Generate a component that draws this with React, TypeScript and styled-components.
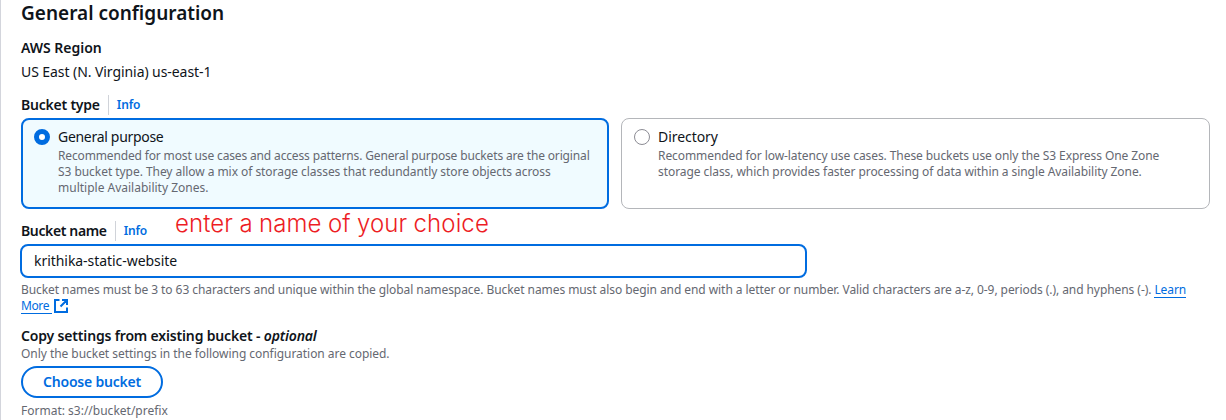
import React from 'react';
import styled, { createGlobalStyle } from 'styled-components';

const GlobalStyle = createGlobalStyle`
  *, *::before, *::after { box-sizing: border-box; }
  body { margin: 0; background: #fff; overflow: hidden; }
`;

const blue = '#006ce0';

const Panel = styled.main`
  position: relative;
  width: 1226px;
  height: 420px;
  overflow: hidden;
  padding: 0 16px 0 20px;
  border-left: 1px solid #d3d5dc;
  background: #fff;
  color: #0f141a;
  font-family: 'Noto Sans', 'Open Sans', sans-serif;
`;

const Title = styled.h2<{ $ls: number }>`
  margin: 0 0 11px;
  font-size: 19px;
  line-height: 27px;
  font-weight: 600;
  white-space: nowrap;
  letter-spacing: ${(p) => p.$ls}px;
`;

const Label = styled.div<{ $ls: number }>`
  font-size: 14px;
  line-height: 20px;
  font-weight: 600;
  white-space: nowrap;
  letter-spacing: ${(p) => p.$ls}px;
`;

const Value = styled.div<{ $ls: number }>`
  margin-top: 4px;
  font-size: 14px;
  line-height: 20px;
  white-space: nowrap;
  letter-spacing: ${(p) => p.$ls}px;
`;

const LabelRow = styled.div<{ $top: number; $bottom: number }>`
  display: flex;
  align-items: center;
  height: 20px;
  margin: ${(p) => p.$top}px 0 ${(p) => p.$bottom}px;
`;

const InfoLink = styled.a<{ $ls: number }>`
  margin-left: 8px;
  padding-left: 8px;
  border-left: 1px solid #d0d3d9;
  color: ${blue};
  font-size: 12px;
  line-height: 20px;
  font-weight: 600;
  letter-spacing: ${(p) => p.$ls}px;
`;

const Tiles = styled.div`
  display: grid;
  grid-template-columns: 588px 589px;
  gap: 12px;
  height: 91px;
`;

const Tile = styled.label<{ $selected?: boolean }>`
  display: flex;
  gap: 8px;
  padding: ${(p) => (p.$selected ? '8px 11px' : '9px 12px')};
  border: ${(p) => (p.$selected ? `2px solid ${blue}` : '1px solid #b4b6ba')};
  border-radius: 8px;
  background: ${(p) => (p.$selected ? '#f0fbff' : '#fff')};
`;

const Radio = styled.span<{ $selected?: boolean }>`
  flex: none;
  width: 16px;
  height: 16px;
  margin-top: 1px;
  border-radius: 50%;
  border: ${(p) => (p.$selected ? `5px solid ${blue}` : '1px solid #8c8c94')};
  background: #fff;
`;

const TileTitle = styled.div<{ $ls: number }>`
  margin-bottom: 2px;
  font-size: 14px;
  line-height: 18px;
  letter-spacing: ${(p) => p.$ls}px;
`;

const Note = styled.div<{ $ls: number }>`
  color: #656871;
  font-size: 12px;
  line-height: 16px;
  white-space: nowrap;
  letter-spacing: ${(p) => p.$ls}px;
`;

const NameInput = styled.div<{ $ls: number }>`
  display: flex;
  align-items: center;
  width: 787px;
  height: 34px;
  margin: 0 0 4px -1px;
  padding: 0 12px 1px;
  border: 2px solid ${blue};
  border-radius: 8px;
  font-size: 14px;
  letter-spacing: ${(p) => p.$ls}px;
`;

const Link = styled.a`
  display: inline-block;
  height: 16px;
  color: ${blue};
  border-bottom: 1px solid ${blue};
`;

const MoreRow = styled(Note)`
  display: flex;
  margin-bottom: 12px;
`;

const ExternalIcon = styled.svg`
  margin-left: 1px;
`;

const ChooseButton = styled.button<{ $ls: number }>`
  display: block;
  width: 142px;
  height: 32px;
  margin: 4px 0 5px;
  padding: 0;
  border: 2px solid ${blue};
  border-radius: 16px;
  background: #fff;
  color: ${blue};
  font: 600 14px/20px 'Noto Sans', 'Open Sans', sans-serif;
  letter-spacing: ${(p) => p.$ls}px;
`;

const Annotation = styled.div`
  position: absolute;
  left: 174px;
  top: 209px;
  color: #ed1c24;
  font: 350 24px/30px Inter, sans-serif;
  letter-spacing: 0.1px;
  word-spacing: -0.5px;
  white-space: nowrap;
`;

export default function App() {
  return (
    <>
      <GlobalStyle />
      <Panel>
        <Title $ls={0}>General configuration</Title>
        <Label $ls={-0.04}>AWS Region</Label>
        <Value $ls={-0.07}>US East (N. Virginia) us-east-1</Value>

        <LabelRow $top={13} $bottom={3}>
          <Label $ls={-0.22}>Bucket type</Label>
          <InfoLink $ls={-0.1}>Info</InfoLink>
        </LabelRow>
        <Tiles>
          <Tile $selected>
            <Radio $selected />
            <div>
              <TileTitle $ls={-0.3}>General purpose</TileTitle>
              <Note $ls={-0.148}>Recommended for most use cases and access patterns. General purpose buckets are the original</Note>
              <Note $ls={-0.05}>S3 bucket type. They allow a mix of storage classes that redundantly store objects across</Note>
              <Note $ls={0}>multiple Availability Zones.</Note>
            </div>
          </Tile>
          <Tile>
            <Radio />
            <div>
              <TileTitle $ls={-0.05}>Directory</TileTitle>
              <Note $ls={-0.08}>Recommended for low-latency use cases. These buckets use only the S3 Express One Zone</Note>
              <Note $ls={-0.065}>storage class, which provides faster processing of data within a single Availability Zone.</Note>
            </div>
          </Tile>
        </Tiles>

        <LabelRow $top={12} $bottom={3}>
          <Label $ls={-0.37}>Bucket name</Label>
          <InfoLink $ls={-0.1}>Info</InfoLink>
        </LabelRow>
        <NameInput $ls={-0.05}>krithika-static-website</NameInput>
        <Note $ls={-0.07}>
          Bucket names must be 3 to 63 characters and unique within the global namespace. Bucket names must also begin and end with a letter or number. Valid characters are a-z, 0-9, periods (.), and hyphens (-). <Link>Learn</Link>
        </Note>
        <MoreRow $ls={-0.4}>
          <Link>More&nbsp;</Link>
          <ExternalIcon width="16" height="16" viewBox="0 0 16 16" fill="none" stroke={blue} strokeWidth="2">
            <path d="M6.5 2H2v12h12V9.5M9 2h5v5M14 2 7.5 8.5" />
          </ExternalIcon>
        </MoreRow>

        <Label $ls={-0.165}>
          Copy settings from existing bucket - <i>optional</i>
        </Label>
        <Note $ls={-0.045}>Only the bucket settings in the following configuration are copied.</Note>
        <ChooseButton $ls={-0.22}>Choose bucket</ChooseButton>
        <Note $ls={0}>Format: s3://bucket/prefix</Note>
        <Annotation>enter a name of your choice</Annotation>
      </Panel>
    </>
  );
}
